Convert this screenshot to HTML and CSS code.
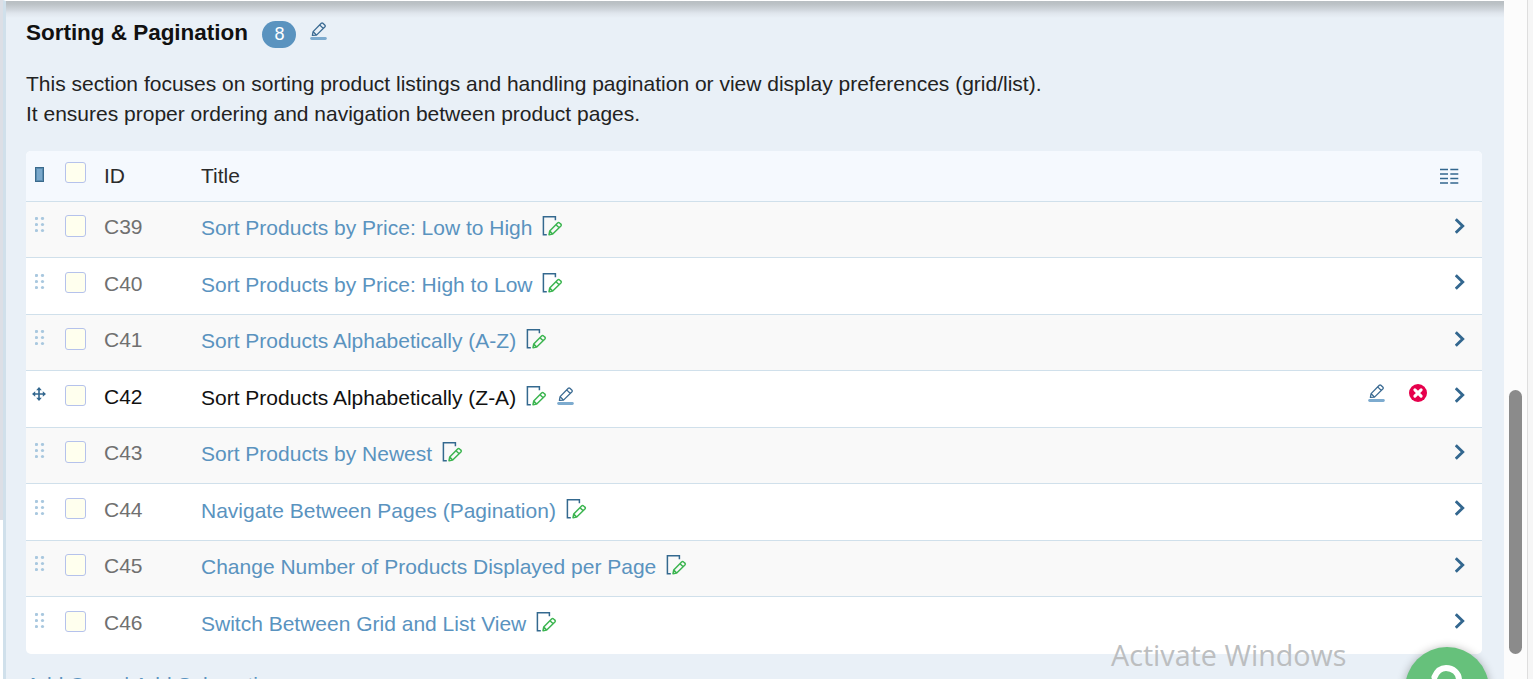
FILE: index.html
```html
<!DOCTYPE html>
<html lang="en">
<head>
<meta charset="utf-8">
<title>Sorting &amp; Pagination</title>
<link rel="stylesheet" href="styles.css">
</head>
<body>
<svg class="defs" width="0" height="0">
  <symbol id="pencil" viewBox="0 0 17 19">
    <path d="M2.4 13.4 3.1 9.6 11.3 1.3Q12.1.6 12.9 1.3L15 3.3Q15.6 4 15 4.7L6.5 13.1ZM9.9 3.1 13.1 6.2M3.4 9.9 6.1 12.7" fill="none" stroke="#3a6a92" stroke-width="1.3" stroke-linejoin="round"/>
    <path d="M1.6 16.5H15.4" stroke="#7dabcf" stroke-width="2.8" stroke-linecap="round"/>
  </symbol>
  <symbol id="note" viewBox="0 0 21 21">
    <path d="M4.8 18.8H1.4V.8H13.4V4.2" fill="none" stroke="#34698f" stroke-width="1.5"/>
    <path d="M7 18.7 7.7 15.1 15.6 7Q16.6 6 17.6 7L18.9 8.1Q19.8 9 18.9 10L10.7 18ZM14 8.7 17.2 11.7M8 15.4 10.4 17.8" fill="none" stroke="#3cb550" stroke-width="1.5" stroke-linejoin="round"/>
  </symbol>
  <symbol id="chevron" viewBox="0 0 10 16">
    <path d="M1.8 2.2 7.7 8 1.8 13.8" fill="none" stroke="#33678f" stroke-width="2.9" stroke-linecap="square"/>
  </symbol>
  <symbol id="grip" viewBox="0 0 10 16">
    <g fill="#a9c8df"><circle cx="1.5" cy="1.5" r="1.6"/><circle cx="7.5" cy="1.5" r="1.6"/><circle cx="1.5" cy="7.5" r="1.6"/><circle cx="7.5" cy="7.5" r="1.6"/><circle cx="1.5" cy="13.5" r="1.6"/><circle cx="7.5" cy="13.5" r="1.6"/></g>
  </symbol>
</svg>
<div class="app">
  <div class="gutter"></div>
  <main class="panel">
    <header class="heading">
      <h1>Sorting &amp; Pagination</h1>
      <span class="count">8</span>
      <svg class="pencil"><use href="#pencil"/></svg>
    </header>
    <p class="description">This section focuses on sorting product listings and handling pagination or view display preferences (grid/list).<br>It ensures proper ordering and navigation between product pages.</p>
    <section class="table">
      <div class="row head">
        <span class="handle"><i class="collapse"></i></span>
        <span class="check"></span>
        <span class="id">ID</span>
        <span class="title">Title</span>
        <svg class="columns" width="19" height="17" viewBox="0 0 19 17"><path d="M0 1.5H8M10.3 1.5H18.3M0 6H8M10.3 6H18.3M0 10.5H8M10.3 10.5H18.3M0 15H8M10.3 15H18.3" stroke="#33678f" stroke-width="1.6"/></svg>
      </div>
      <div class="row">
        <span class="handle"><svg class="grip"><use href="#grip"/></svg></span><span class="check"></span><span class="id">C39</span>
        <span class="title">Sort Products by Price: Low to High<svg class="note"><use href="#note"/></svg></span>
        <svg class="chevron"><use href="#chevron"/></svg>
      </div>
      <div class="row">
        <span class="handle"><svg class="grip"><use href="#grip"/></svg></span><span class="check"></span><span class="id">C40</span>
        <span class="title">Sort Products by Price: High to Low<svg class="note"><use href="#note"/></svg></span>
        <svg class="chevron"><use href="#chevron"/></svg>
      </div>
      <div class="row">
        <span class="handle"><svg class="grip"><use href="#grip"/></svg></span><span class="check"></span><span class="id">C41</span>
        <span class="title">Sort Products Alphabetically (A-Z)<svg class="note"><use href="#note"/></svg></span>
        <svg class="chevron"><use href="#chevron"/></svg>
      </div>
      <div class="row active">
        <span class="handle"><svg class="move" width="14" height="14" viewBox="0 0 14 14"><path d="M7 1V13M1 7H13" stroke="#33678f" stroke-width="1.6"/><path d="M7 0 9.8 3.2H4.2ZM7 14 9.8 10.8H4.2ZM0 7 3.2 4.2V9.8ZM14 7 10.8 4.2V9.8Z" fill="#33678f"/></svg></span><span class="check"></span><span class="id">C42</span>
        <span class="title">Sort Products Alphabetically (Z-A)<svg class="note"><use href="#note"/></svg><svg class="pencil"><use href="#pencil"/></svg></span>
        <span class="actions">
          <svg class="pencil"><use href="#pencil"/></svg>
          <svg class="delete" width="18" height="18" viewBox="0 0 18 18"><circle cx="9" cy="9" r="9" fill="#e6004c"/><path d="M5.9 5.9 12.1 12.1M12.1 5.9 5.9 12.1" stroke="#fff" stroke-width="3.1" stroke-linecap="round"/></svg>
        </span>
        <svg class="chevron"><use href="#chevron"/></svg>
      </div>
      <div class="row">
        <span class="handle"><svg class="grip"><use href="#grip"/></svg></span><span class="check"></span><span class="id">C43</span>
        <span class="title">Sort Products by Newest<svg class="note"><use href="#note"/></svg></span>
        <svg class="chevron"><use href="#chevron"/></svg>
      </div>
      <div class="row">
        <span class="handle"><svg class="grip"><use href="#grip"/></svg></span><span class="check"></span><span class="id">C44</span>
        <span class="title">Navigate Between Pages (Pagination)<svg class="note"><use href="#note"/></svg></span>
        <svg class="chevron"><use href="#chevron"/></svg>
      </div>
      <div class="row">
        <span class="handle"><svg class="grip"><use href="#grip"/></svg></span><span class="check"></span><span class="id">C45</span>
        <span class="title">Change Number of Products Displayed per Page<svg class="note"><use href="#note"/></svg></span>
        <svg class="chevron"><use href="#chevron"/></svg>
      </div>
      <div class="row">
        <span class="handle"><svg class="grip"><use href="#grip"/></svg></span><span class="check"></span><span class="id">C46</span>
        <span class="title">Switch Between Grid and List View<svg class="note"><use href="#note"/></svg></span>
        <svg class="chevron"><use href="#chevron"/></svg>
      </div>
    </section>
    <div class="links"><a>Add Case</a> | <a>Add Subsection</a></div>
  </main>
  <div class="scrollbar"><div class="thumb"></div></div>
  <div class="edge"></div>
  <div class="watermark">Activate Windows</div>
  <div class="help"><svg width="84" height="84" viewBox="0 0 84 84"><path d="M29.5 30C32 24 36 21 41 21C48 21 54 26 54 33C54 42 42 42 42 52" fill="none" stroke="#fff" stroke-width="6" stroke-linecap="round"/><circle cx="42" cy="61" r="4" fill="#fff"/></svg></div>
</div>
</body>
</html>
```
FILE: styles.css
```css
* { box-sizing: border-box; }
body {
  margin: 0;
  overflow: hidden;
  background: #fff;
  font: 21px/30px "Liberation Sans", Arial, sans-serif;
  color: #222;
}
.defs { position: absolute; }
svg { display: block; flex: none; }
.app {
  position: relative;
  display: flex;
  height: 679px;
  overflow: hidden;
}
.gutter { width: 3px; height: 520px; background: #dcdfe6; }
.panel {
  width: 1501px;
  height: 679px;
  overflow: hidden;
  padding: 17px 22px 0 20px;
  border-left: 3px solid #d0e0eb;
  border-top: 1px solid #fff;
  background: linear-gradient(#b8bec2 0, #bcc2c6 3px, #cdd3d9 8px, #dfe5ec 12px, #e9f0f7 17px);
}
.heading { display: flex; height: 51px; }
h1 {
  margin: 0;
  font-size: 22.5px;
  line-height: 30px;
  font-weight: 700;
  letter-spacing: -.03px;
  color: #111;
  white-space: nowrap;
}
.count {
  width: 34px;
  height: 27px;
  margin: 3px 14px 0 14.5px;
  border-radius: 14px;
  background: #5a93bf;
  color: #fff;
  font-size: 18px;
  line-height: 26px;
  text-align: center;
}
.pencil { width: 17px; height: 19px; }
.heading .pencil { margin-top: 4px; }
.description { margin: 0 0 22px; color: #222; white-space: nowrap; }
.table {
  border-radius: 5px;
  overflow: hidden;
  background: #fff;
}
.row {
  display: grid;
  grid-template-columns: 39px 39px 97px 1fr auto 31px;
  align-items: start;
  height: 56.5px;
  border-top: 1px solid #d0e0eb;
  color: #707070;
}
.row:nth-child(even) { background: #f9f9f9; }
.row:last-child { height: 57.6px; }
.row.head {
  height: 49.9px;
  border-top: 0;
  background: #f5f9fe;
  color: #2b2b2b;
}
.handle { padding: 15.2px 0 0 9px; }
.head .handle { padding: 16px 0 0 9px; }
.collapse {
  display: block;
  width: 9px;
  height: 15px;
  border: 1px solid #3a6a8c;
  background: #7aa8cb;
  box-shadow: inset 0 0 0 1px #5a8cb0;
}
.grip { width: 10px; height: 16px; }
.move { margin-left: -3px; }
.check {
  width: 21px;
  height: 21.6px;
  margin-top: 13.4px;
  border: 1px solid #b5c2ec;
  border-radius: 3px;
  background: #ffffee;
}
.head .check { height: 21px; margin-top: 11px; }
.id { padding-top: 10.3px; }
.title {
  display: flex;
  padding-top: 11.2px;
  color: #5a93bf;
  white-space: nowrap;
}
.head .id, .head .title { padding-top: 10px; color: #2b2b2b; }
.columns { grid-column: 5 / 7; margin: 17px 23px 0 0; }
.note { width: 21px; height: 21px; margin: 3px 0 0 10px; }
.title .pencil { margin: 4px 0 0 10px; }
.chevron { grid-column: 6; width: 10px; height: 16px; margin: 15.7px 0 0 3.5px; }
.active .id, .active .title { color: #111; }
.actions { display: flex; gap: 24px; padding: 13px 24px 0 0; }
.links { padding-top: 16px; color: #5a93bf; }
.scrollbar {
  width: 23px;
  height: 679px;
  padding: 390px 0 0 5px;
  background: #fcfcfc;
}
.thumb { width: 13px; height: 264px; border-radius: 7px; background: #8b8b8b; }
.edge { flex: 1; height: 679px; border-left: 1px solid #dedede; background: #f6f6f6; }
.watermark {
  position: absolute;
  left: 1111px;
  top: 635px;
  font: 400 28.7px/40px "Open Sans", sans-serif;
  color: #bcbec0;
  white-space: nowrap;
}
.help {
  position: absolute;
  left: 1405px;
  top: 647px;
  width: 84px;
  height: 84px;
  border-radius: 50%;
  background: #66c17b;
  box-shadow: 0 1px 10px rgba(0, 0, 0, .3);
}
```
